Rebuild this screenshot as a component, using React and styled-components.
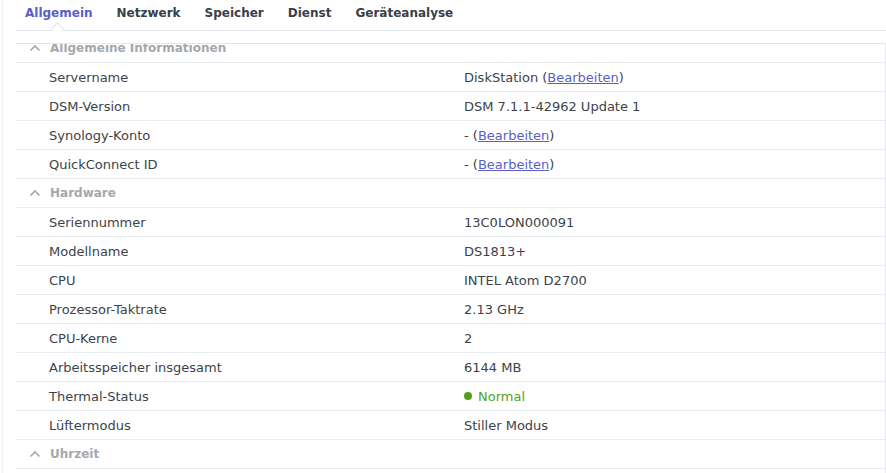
import React from "react";
import styled, { createGlobalStyle } from "styled-components";

const Global = createGlobalStyle`
  html, body { margin: 0; padding: 0; background: #fff; }
  body { font-family: "DejaVu Sans", Verdana, sans-serif; overflow: hidden; }
`;

const Page = styled.div`
  margin-left: 2px;
  border-left: 1px solid #eef0f2;
  height: 473px;
  display: flex;
  flex-direction: column;
  box-sizing: border-box;
`;

const TabBar = styled.div`
  margin-left: 13px;
  height: 31px;
  box-sizing: border-box;
  padding: 0 0 4px 9px;
  border-bottom: 1px solid #dfe3e8;
  display: flex;
  align-items: center;
`;

const Tab = styled.div`
  position: relative;
  font-size: 12px;
  font-weight: bold;
  color: ${(p) => (p.$active ? "#5561c9" : "#3a4048")};
  margin-right: 24px;
  line-height: 16px;
`;

const Notch = styled.span`
  position: absolute;
  left: 50%;
  bottom: -12px;
  width: 8px;
  height: 8px;
  margin-left: -6px;
  background: #fff;
  border-left: 1px solid #dfe3e8;
  border-top: 1px solid #dfe3e8;
  transform: rotate(45deg);
`;

const Spacer = styled.div`
  margin-left: 13px;
  height: 12px;
  border-bottom: 1px solid #e3e6ea;
`;

const ScrollArea = styled.div`
  flex: 1;
  overflow: hidden;
  margin-left: 13px;
  border-right: 1px solid #e6e8eb;
`;

const Content = styled.div`
  margin-top: -10px;
`;

const Row = styled.div`
  display: grid;
  grid-template-columns: 448px 1fr;
  height: 28px;
  border-bottom: 1px solid #e8ebee;
  align-items: center;
  font-size: 13px;
  color: #3d434a;
`;

const Label = styled.div`
  padding-left: 33px;
`;

const Value = styled.div`
  display: flex;
  align-items: center;
  color: ${(p) => (p.$ok ? "#55a11f" : "#3d434a")};
`;

const HeaderRow = styled.div`
  display: flex;
  align-items: center;
  height: 28px;
  border-bottom: 1px solid #e8ebee;
  padding-left: 13px;
  gap: 9px;
  font-size: 12px;
  font-weight: bold;
  color: #a3a8ae;
`;

const Link = styled.a`
  color: #5a5fc4;
  text-decoration: underline;
  cursor: pointer;
`;

const Dot = styled.span`
  width: 8px;
  height: 8px;
  border-radius: 50%;
  background: #52a01c;
  margin-right: 6px;
`;

const Chevron = () => (
  <svg width="12" height="8" viewBox="0 0 12 8">
    <polyline
      points="1.5,6.5 6,2 10.5,6.5"
      fill="none"
      stroke="#a5a9ae"
      strokeWidth="1.7"
    />
  </svg>
);

const Edit = ({ prefix }) => (
  <span>
    {prefix} (<Link>Bearbeiten</Link>)
  </span>
);

const sections = [
  {
    title: "Allgemeine Informationen",
    rows: [
      ["Servername", <Edit prefix="DiskStation" />],
      ["DSM-Version", "DSM 7.1.1-42962 Update 1"],
      ["Synology-Konto", <Edit prefix="-" />],
      ["QuickConnect ID", <Edit prefix="-" />],
    ],
  },
  {
    title: "Hardware",
    rows: [
      ["Seriennummer", "13C0LON000091"],
      ["Modellname", "DS1813+"],
      ["CPU", "INTEL Atom D2700"],
      ["Prozessor-Taktrate", "2.13 GHz"],
      ["CPU-Kerne", "2"],
      ["Arbeitsspeicher insgesamt", "6144 MB"],
      ["Thermal-Status", "Normal", true],
      ["Lüftermodus", "Stiller Modus"],
    ],
  },
  { title: "Uhrzeit", rows: [] },
];

const tabs = ["Allgemein", "Netzwerk", "Speicher", "Dienst", "Geräteanalyse"];

export default function App() {
  return (
    <>
      <Global />
      <Page>
        <TabBar>
          {tabs.map((t, i) => (
            <Tab key={t} $active={i === 0}>
              {t}
              {i === 0 && <Notch />}
            </Tab>
          ))}
        </TabBar>
        <Spacer />
        <ScrollArea>
          <Content>
            {sections.map((s) => (
              <React.Fragment key={s.title}>
                <HeaderRow>
                  <Chevron />
                  {s.title}
                </HeaderRow>
                {s.rows.map(([l, v, ok]) => (
                  <Row key={l}>
                    <Label>{l}</Label>
                    <Value $ok={ok}>
                      {ok && <Dot />}
                      {v}
                    </Value>
                  </Row>
                ))}
              </React.Fragment>
            ))}
          </Content>
        </ScrollArea>
      </Page>
    </>
  );
}
